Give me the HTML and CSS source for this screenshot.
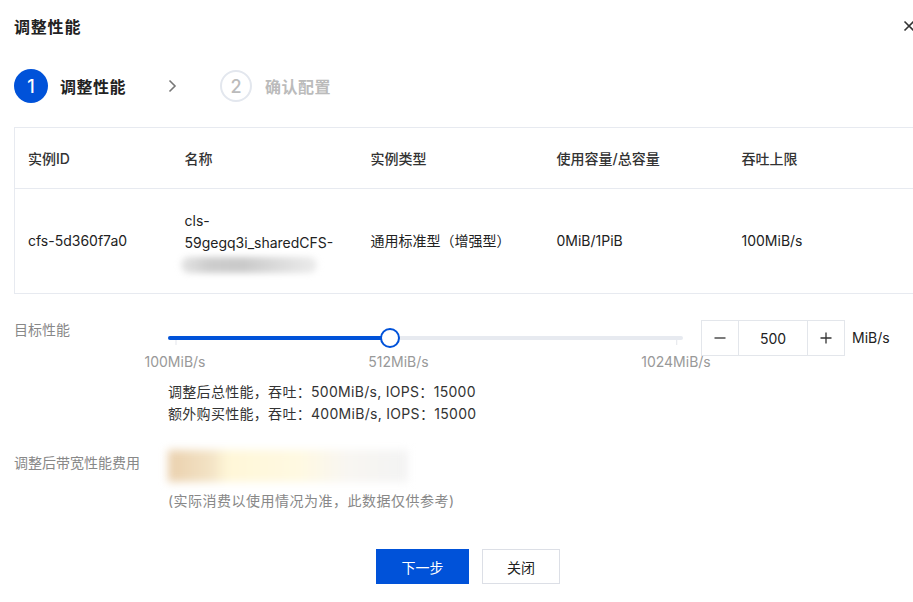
FILE: index.html
```html
<!DOCTYPE html>
<html lang="zh-CN">

<head>
    <meta charset="UTF-8">
    <meta name="viewport" content="width=device-width, initial-scale=1.0">
    <title>调整性能</title>
    <link rel="stylesheet" href="styles.css">
</head>

<body>
    <div class="dialog">
        <div class="dialog-header">
            <h2 class="dialog-title">调整性能</h2>
            <span class="dialog-close">
                <svg width="14" height="14" viewBox="0 0 14 14">
                    <path d="M2.5 2.5 L11.5 11.5 M11.5 2.5 L2.5 11.5" stroke="#333" stroke-width="1.6" fill="none" />
                </svg>
            </span>
        </div>

        <div class="steps">
            <div class="step step-active">
                <span class="step-num">1</span>
                <span class="step-text">调整性能</span>
            </div>
            <svg class="step-arrow" width="10" height="14" viewBox="0 0 10 14">
                <path d="M2.5 1.5 L8 7 L2.5 12.5" stroke="#777" stroke-width="1.6" fill="none" />
            </svg>
            <div class="step">
                <span class="step-num">2</span>
                <span class="step-text">确认配置</span>
            </div>
        </div>

        <table class="instance-table">
            <colgroup>
                <col style="width:157px">
                <col style="width:186px">
                <col style="width:186px">
                <col style="width:185px">
                <col>
            </colgroup>
            <thead>
                <tr>
                    <th>实例ID</th>
                    <th>名称</th>
                    <th>实例类型</th>
                    <th>使用容量/总容量</th>
                    <th>吞吐上限</th>
                </tr>
            </thead>
            <tbody>
                <tr>
                    <td>cfs-5d360f7a0</td>
                    <td>
                        <span class="name-line">cls-</span>
                        <span class="name-line">59gegq3i_sharedCFS-</span>
                        <span class="name-blur"></span>
                    </td>
                    <td>通用标准型（增强型）</td>
                    <td>0MiB/1PiB</td>
                    <td>100MiB/s</td>
                </tr>
            </tbody>
        </table>

        <div class="form-row perf-row">
            <div class="form-label">目标性能</div>
            <div class="form-control">
                <div class="perf-line">
                    <div class="slider">
                        <div class="slider-rail">
                            <div class="slider-track" style="width:43.1%"></div>
                            <span class="slider-thumb" style="left:43.1%"></span>
                        </div>
                        <div class="slider-marks">
                            <span class="mark" style="left:0%">100MiB/s</span>
                            <span class="mark mark-mid" style="left:44.6%">512MiB/s</span>
                            <span class="mark" style="left:100%">1024MiB/s</span>
                        </div>
                    </div>
                    <div class="input-number">
                        <span class="input-btn">
                            <svg width="12" height="12" viewBox="0 0 12 12">
                                <path d="M0.5 6 H11.5" stroke="#333" stroke-width="1.3" />
                            </svg>
                        </span>
                        <span class="input-value">500</span>
                        <span class="input-btn">
                            <svg width="12" height="12" viewBox="0 0 12 12">
                                <path d="M0.5 6 H11.5 M6 0.5 V11.5" stroke="#333" stroke-width="1.3" />
                            </svg>
                        </span>
                    </div>
                    <span class="unit">MiB/s</span>
                </div>
                <div class="perf-info">
                    <p>调整后总性能，吞吐：500MiB/s, IOPS：15000</p>
                    <p>额外购买性能，吞吐：400MiB/s, IOPS：15000</p>
                </div>
            </div>
        </div>

        <div class="form-row fee-row">
            <div class="form-label">调整后带宽性能费用</div>
            <div class="form-control">
                <div class="fee-blur"></div>
                <p class="fee-note">(实际消费以使用情况为准，此数据仅供参考)</p>
            </div>
        </div>

        <div class="dialog-footer">
            <button class="btn btn-primary">下一步</button>
            <button class="btn btn-default">关闭</button>
        </div>
    </div>
</body>

</html>
```

FILE: styles.css
```css
* {
    margin: 0;
    padding: 0;
    box-sizing: border-box;
}

body {
    width: 913px;
    height: 602px;
    overflow: hidden;
    background: #fff;
    font-family: "Inter", "Noto Sans CJK SC", sans-serif;
    font-size: 14px;
    color: #222;
}

.dialog {
    width: 932px;
    padding: 0 14px;
}

.dialog-header {
    height: 52px;
    display: flex;
    align-items: center;
    justify-content: space-between;
}

.dialog-title {
    font-size: 16px;
    font-weight: 700;
    color: #222;
    letter-spacing: 0.8px;
}

.dialog-close {
    display: flex;
    margin-right: 2px;
}

/* 步骤条 */
.steps {
    margin-top: 17px;
    height: 34px;
    display: flex;
    align-items: center;
}

.step {
    display: flex;
    align-items: center;
}

.step-num {
    width: 32px;
    height: 32px;
    border-radius: 50%;
    border: 2px solid #e3e7ee;
    color: #bbb;
    font-size: 18px;
    font-weight: 500;
    display: flex;
    align-items: center;
    justify-content: center;
}

.step-text {
    margin-left: 13px;
    font-size: 16px;
    font-weight: 700;
    color: #bbb;
    letter-spacing: 0.5px;
}

.step-active .step-num {
    width: 34px;
    height: 34px;
    border: none;
    background: #0052d9;
    color: #fff;
}

.step-active .step-text {
    margin-left: 12px;
    color: #222;
}

.step-arrow {
    margin: 0 43px 0 41px;
}

/* 实例表格 */
.instance-table {
    margin-top: 24px;
    width: 100%;
    table-layout: fixed;
    border-collapse: collapse;
    border: 1px solid #e7eaf0;
}

.instance-table th,
.instance-table td {
    text-align: left;
    padding: 0 13px;
    vertical-align: middle;
}

.instance-table th {
    height: 61px;
    font-weight: 500;
    color: #333;
    border-bottom: 1px solid #e7eaf0;
}

.instance-table td {
    height: 105px;
    line-height: 22px;
    color: #222;
}

.name-line {
    display: block;
}

.name-blur {
    display: block;
    width: 136px;
    height: 16px;
    margin: 3px 0 0 -4px;
    border-radius: 8px;
    background: linear-gradient(90deg, #e4e4e4, #cdcdcd 20%, #c9c9c9 45%, #dadada 70%, #ececec);
    filter: blur(3px);
}

/* 表单 */
.form-row {
    display: flex;
}

.form-label {
    width: 154px;
    flex-shrink: 0;
    color: #888;
    line-height: 20px;
}

.perf-row {
    margin-top: 26px;
}

.perf-line {
    display: flex;
    align-items: flex-start;
}

.slider {
    width: 515px;
    height: 52px;
    padding-top: 16px;
}

.slider-rail {
    position: relative;
    height: 4px;
    border-radius: 2px;
    background: #e7eaf0;
}

.slider-track {
    height: 4px;
    border-radius: 2px;
    background: #0052d9;
}

.slider-thumb {
    position: absolute;
    top: 50%;
    width: 20px;
    height: 20px;
    margin: -10px 0 0 -10px;
    border-radius: 50%;
    border: 2px solid #0052d9;
    background: #fff;
}

.slider-marks {
    position: relative;
    margin: 0 7px;
    height: 32px;
}

.mark {
    position: absolute;
    top: 14px;
    transform: translateX(-50%);
    color: #999;
    font-size: 14px;
    line-height: 16px;
    white-space: nowrap;
}

.mark::before {
    content: "";
    position: absolute;
    left: 50%;
    top: -14px;
    width: 1px;
    height: 5px;
    background: #e3e6eb;
}

.mark-mid::before {
    display: none;
}

.input-number {
    margin-left: 18px;
    display: flex;
    height: 36px;
    border: 1px solid #e3e6eb;
}

.input-btn {
    width: 36px;
    display: flex;
    align-items: center;
    justify-content: center;
}

.input-value {
    width: 70px;
    border-left: 1px solid #e3e6eb;
    border-right: 1px solid #e3e6eb;
    display: flex;
    align-items: center;
    justify-content: center;
    color: #222;
}

.unit {
    margin-left: 7px;
    line-height: 36px;
    color: #222;
}

.perf-info {
    margin-top: 9px;
    line-height: 22px;
    color: #333;
    letter-spacing: 0.3px;
}

.fee-row {
    margin-top: 25px;
}

.fee-row .form-label {
    line-height: 26px;
}

.fee-blur {
    width: 240px;
    height: 32px;
    background: linear-gradient(90deg, #ead0ad 0%, #f3e3c5 18%, #fff7d8 25%, #fff9e2 55%, #f8f6f2 75%, #f3f3f3 100%);
    filter: blur(4px);
}

.fee-note {
    margin-top: 9px;
    line-height: 20px;
    color: #888;
    font-size: 14px;
    letter-spacing: 0.5px;
}

.dialog-footer {
    margin-top: 38px;
    padding-left: 4px;
    display: flex;
    justify-content: center;
    gap: 13px;
}

.btn {
    height: 35px;
    font-family: inherit;
    font-size: 14px;
    cursor: pointer;
    border: 1px solid #dcdfe6;
}

.btn-primary {
    width: 93px;
    background: #0052d9;
    border-color: #0052d9;
    color: #fff;
}

.btn-default {
    width: 78px;
    background: #fff;
    color: #222;
}
```
